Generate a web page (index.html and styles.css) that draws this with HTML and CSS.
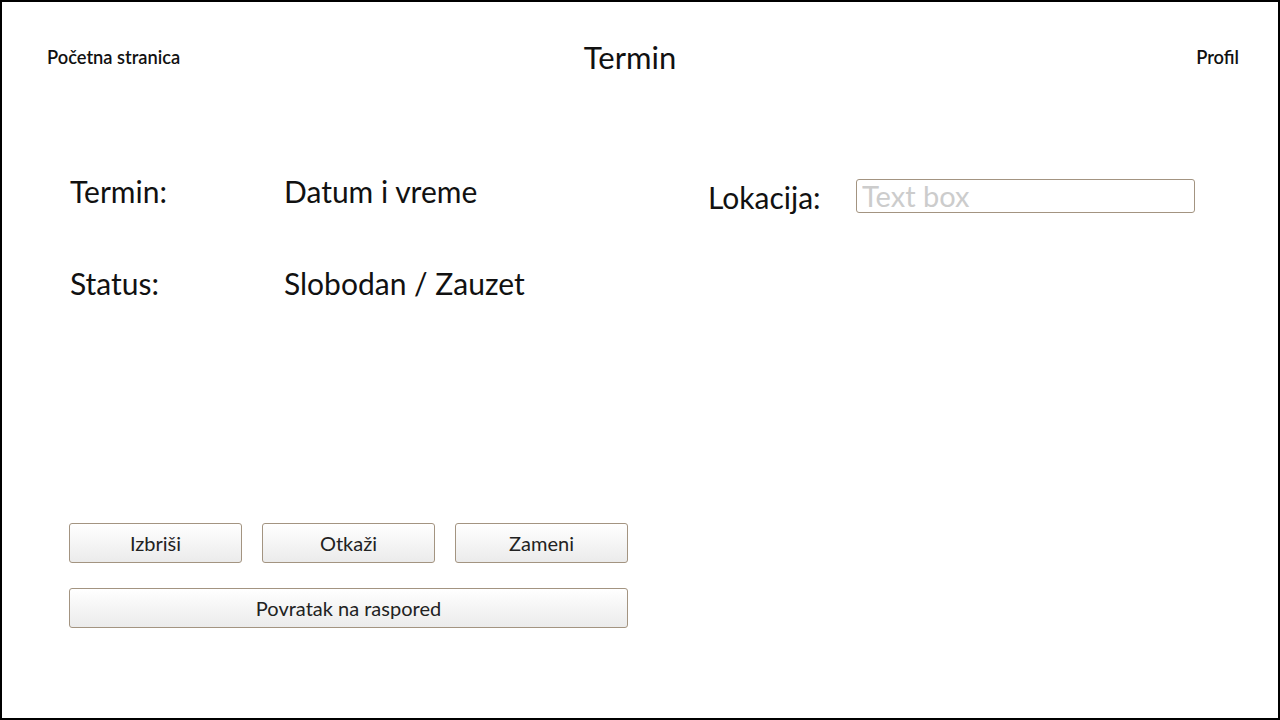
FILE: index.html
```html
<!DOCTYPE html>
<html lang="sr">
<head>
<meta charset="utf-8">
<title>Termin</title>
<link rel="stylesheet" href="styles.css">
</head>
<body>
<div class="page">
  <header class="header">
    <a class="nav nav-left" href="#">Početna stranica</a>
    <h1 class="title">Termin</h1>
    <a class="nav nav-right" href="#">Profil</a>
  </header>
  <main class="content">
    <section class="details">
      <div class="row">
        <span class="label">Termin:</span>
        <span class="value">Datum i vreme</span>
      </div>
      <div class="row">
        <span class="label">Status:</span>
        <span class="value">Slobodan / Zauzet</span>
      </div>
    </section>
    <section class="location">
      <label class="loc-label" for="loc">Lokacija:</label>
      <input class="textbox" id="loc" type="text" placeholder="Text box">
    </section>
  </main>
  <div class="actions">
    <button class="btn">Izbriši</button>
    <button class="btn">Otkaži</button>
    <button class="btn">Zameni</button>
    <button class="btn btn-wide">Povratak na raspored</button>
  </div>
</div>
</body>
</html>
```

FILE: styles.css
```css
html, body {
  margin: 0;
  padding: 0;
  background: #fff;
}

.page {
  width: 1280px;
  height: 720px;
  box-sizing: border-box;
  border: 2px solid #000;
  display: flex;
  flex-direction: column;
  font-family: Lato, "Open Sans", sans-serif;
  color: #111;
}

.header {
  display: grid;
  grid-template-columns: 1fr auto 1fr;
  align-items: center;
  height: 32px;
  margin-top: 39px;
  padding: 0 39px 0 45px;
}

.nav {
  font-size: 18.3px;
  color: #111;
  text-decoration: none;
  font-weight: 600;
  margin-top: 0;
}

.nav-right {
  justify-self: end;
}

.title {
  margin: 0 26px 0 0;
  font-size: 31px;
  font-weight: 400;
  line-height: 32px;
}

.content {
  display: flex;
  margin-top: 100px;
  padding-left: 68px;
}

.details {
  width: 558px;
  display: flex;
  flex-direction: column;
  gap: 56px;
}

.row {
  display: flex;
  height: 36px;
  align-items: center;
  font-size: 30px;
}

.label {
  width: 214px;
}

.location {
  margin-left: 80px;
  display: flex;
  align-items: center;
  height: 44px;
}

.loc-label {
  width: 148px;
  font-size: 30px;
  padding-top: 4px;
}

.textbox {
  width: 339px;
  height: 34px;
  box-sizing: border-box;
  border: 1px solid #a39481;
  border-radius: 3px;
  padding: 0 5px 0;
  margin-top: 1px;
  font-family: Lato, sans-serif;
  font-size: 29px;
  color: #333;
  outline: none;
}

.textbox::placeholder {
  color: #cccccc;
}

.actions {
  margin-top: auto;
  margin-bottom: 90px;
  margin-left: 67px;
  width: 559px;
  display: grid;
  grid-template-columns: repeat(3, 1fr);
  column-gap: 20px;
  row-gap: 25px;
}

.btn {
  height: 40px;
  box-sizing: border-box;
  border: 1px solid #a39481;
  border-radius: 3px;
  background: linear-gradient(#ffffff, #ebebeb);
  font-family: Lato, sans-serif;
  font-size: 20px;
  color: #222;
  padding: 0;
}

.btn-wide {
  grid-column: 1 / -1;
}
```
